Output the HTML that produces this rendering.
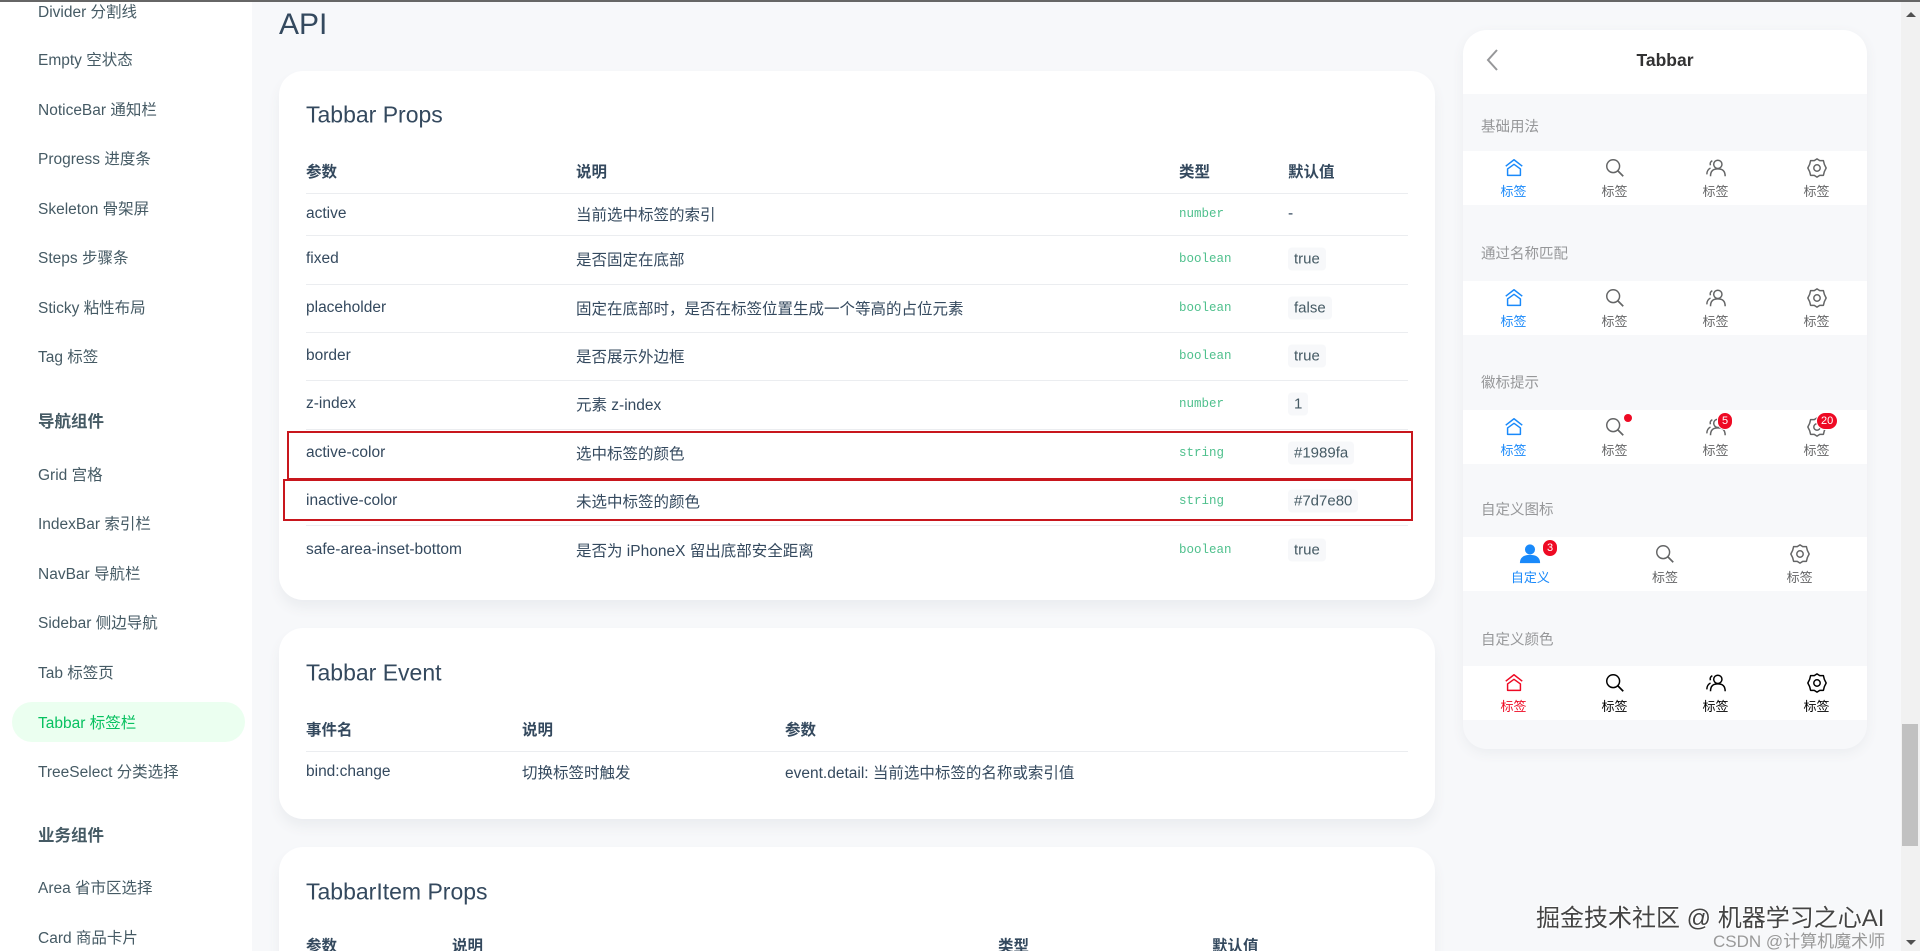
<!DOCTYPE html>
<html style="width:1920px;height:951px;overflow:hidden"><head><meta charset="utf-8"><style>
*{box-sizing:border-box;margin:0;padding:0}
body{width:1920px;height:951px;overflow:hidden;background:#f7f8fa;font-family:"Liberation Sans","Noto Sans CJK SC",sans-serif;color:#34495e}
#wrap{position:relative;width:1920px;height:951px;overflow:hidden;border-top:2px solid #666}
.abs{position:absolute}
.side{position:absolute;left:0;top:0;width:252px;height:951px;background:#fff}
.si{position:absolute;left:38px;font-size:15.5px;color:#455a64;transform:translateY(-50%);white-space:nowrap}
.sg{position:absolute;left:38px;font-size:16.5px;font-weight:bold;color:#455a64;transform:translateY(-50%)}
.act{position:absolute;left:12px;top:700px;width:233px;height:40px;border-radius:20px;background:#ebfff0}
.card{position:absolute;left:279px;width:1156px;background:#fff;border-radius:24px;box-shadow:0 8px 12px #ebedf0}
.ct{position:absolute;left:27px;font-size:23px;color:#34495e;transform:translateY(-50%)}
.th{position:absolute;font-size:15.5px;font-weight:bold;color:#34495e;transform:translateY(-50%)}
.td{position:absolute;font-size:15.5px;color:#34495e;transform:translateY(-50%);white-space:nowrap}
.ty{position:absolute;font-family:"Liberation Mono",monospace;font-size:12.5px;color:#4fc08d;transform:translateY(-50%)}
.code{position:absolute;font-size:15px;color:#455a64;background:#f7f8fa;padding:3px 6px;border-radius:4px;transform:translateY(-50%)}
.ln{position:absolute;left:27px;width:1102px;height:1px;background:#ebedf0}
.red{position:absolute;border:2px solid #c8161d}
.phone{position:absolute;left:1463px;top:28px;width:404px;height:719px;border-radius:24px;background:#f7f8fa;box-shadow:0 4px 12px #ebedf0;overflow:hidden}
.nav{position:absolute;left:0;top:0;width:404px;height:64px;background:#fff}
.lab{position:absolute;left:18px;font-size:14.5px;color:#969799;transform:translateY(-50%)}
.tb{position:absolute;left:0;width:404px;height:54px;background:#fff;display:flex}
.it{flex:1;display:flex;flex-direction:column;align-items:center;justify-content:center;font-size:13px;color:#646566;position:relative}
.it svg{width:22px;height:22px;margin-bottom:2px}
.on{color:#1989fa}
.badge{position:absolute;top:2px;background:#ee0a24;color:#fff;font-size:11px;border-radius:9px;padding:0 4px;line-height:16px;min-width:16px;text-align:center;border:1px solid #fff}
</style></head><body><div id="wrap">
<div class="side">
<div class="si" style="top:9px">Divider 分割线</div>
<div class="si" style="top:57px">Empty 空状态</div>
<div class="si" style="top:107px">NoticeBar 通知栏</div>
<div class="si" style="top:156px">Progress 进度条</div>
<div class="si" style="top:206px">Skeleton 骨架屏</div>
<div class="si" style="top:255px">Steps 步骤条</div>
<div class="si" style="top:305px">Sticky 粘性布局</div>
<div class="si" style="top:354px">Tag 标签</div>
<div class="sg" style="top:418px">导航组件</div>
<div class="si" style="top:472px">Grid 宫格</div>
<div class="si" style="top:521px">IndexBar 索引栏</div>
<div class="si" style="top:571px">NavBar 导航栏</div>
<div class="si" style="top:620px">Sidebar 侧边导航</div>
<div class="si" style="top:670px">Tab 标签页</div>
<div class="act"></div>
<div class="si" style="top:720px;color:#07c160">Tabbar 标签栏</div>
<div class="si" style="top:769px">TreeSelect 分类选择</div>
<div class="sg" style="top:832px">业务组件</div>
<div class="si" style="top:885px">Area 省市区选择</div>
<div class="si" style="top:935px">Card 商品卡片</div>
</div>

<div class="abs" style="left:279px;top:6px;font-size:30px;color:#34495e">API</div>

<div class="card" style="top:69px;height:529px">
<div class="ct" style="top:44px">Tabbar Props</div>
<div class="th" style="left:27px;top:100px">参数</div>
<div class="th" style="left:297px;top:100px">说明</div>
<div class="th" style="left:900px;top:100px">类型</div>
<div class="th" style="left:1009px;top:100px">默认值</div>
<div class="ln" style="top:122px"></div>
<div class="td" style="left:27px;top:143px">active</div><div class="td" style="left:297px;top:143px">当前选中标签的索引</div><div class="ty" style="left:900px;top:143px">number</div><div class="td" style="left:1009px;top:143px">-</div>
<div class="ln" style="top:164px"></div>
<div class="td" style="left:27px;top:188px">fixed</div><div class="td" style="left:297px;top:188px">是否固定在底部</div><div class="ty" style="left:900px;top:188px">boolean</div><div class="code" style="left:1009px;top:188px">true</div>
<div class="ln" style="top:213px"></div>
<div class="td" style="left:27px;top:237px">placeholder</div><div class="td" style="left:297px;top:237px">固定在底部时，是否在标签位置生成一个等高的占位元素</div><div class="ty" style="left:900px;top:237px">boolean</div><div class="code" style="left:1009px;top:237px">false</div>
<div class="ln" style="top:261px"></div>
<div class="td" style="left:27px;top:285px">border</div><div class="td" style="left:297px;top:285px">是否展示外边框</div><div class="ty" style="left:900px;top:285px">boolean</div><div class="code" style="left:1009px;top:285px">true</div>
<div class="ln" style="top:309px"></div>
<div class="td" style="left:27px;top:333px">z-index</div><div class="td" style="left:297px;top:333px">元素 z-index</div><div class="ty" style="left:900px;top:333px">number</div><div class="code" style="left:1009px;top:333px">1</div>
<div class="ln" style="top:358px"></div>
<div class="td" style="left:27px;top:382px">active-color</div><div class="td" style="left:297px;top:382px">选中标签的颜色</div><div class="ty" style="left:900px;top:382px">string</div><div class="code" style="left:1009px;top:382px">#1989fa</div>
<div class="ln" style="top:407px"></div>
<div class="td" style="left:27px;top:430px">inactive-color</div><div class="td" style="left:297px;top:430px">未选中标签的颜色</div><div class="ty" style="left:900px;top:430px">string</div><div class="code" style="left:1009px;top:430px">#7d7e80</div>
<div class="ln" style="top:454px"></div>
<div class="td" style="left:27px;top:479px">safe-area-inset-bottom</div><div class="td" style="left:297px;top:479px">是否为 iPhoneX 留出底部安全距离</div><div class="ty" style="left:900px;top:479px">boolean</div><div class="code" style="left:1009px;top:479px">true</div>
</div>
<div class="red" style="left:287px;top:429px;width:1126px;height:49px"></div>
<div class="red" style="left:283px;top:477px;width:1130px;height:42px"></div>

<div class="card" style="top:626px;height:191px">
<div class="ct" style="top:45px">Tabbar Event</div>
<div class="th" style="left:27px;top:101px">事件名</div>
<div class="th" style="left:243px;top:101px">说明</div>
<div class="th" style="left:506px;top:101px">参数</div>
<div class="ln" style="top:123px"></div>
<div class="td" style="left:27px;top:144px">bind:change</div><div class="td" style="left:243px;top:144px">切换标签时触发</div><div class="td" style="left:506px;top:144px">event.detail: 当前选中标签的名称或索引值</div>
</div>

<div class="card" style="top:845px;height:140px">
<div class="ct" style="top:45px">TabbarItem Props</div>
<div class="th" style="left:27px;top:98px">参数</div>
<div class="th" style="left:173px;top:98px">说明</div>
<div class="th" style="left:719px;top:98px">类型</div>
<div class="th" style="left:933px;top:98px">默认值</div>
</div>

<svg width="0" height="0" style="position:absolute"><defs>
<symbol id="home" viewBox="0 0 24 24"><path d="M3 10 L12 3 L21 10 M5 13 L12 8 L19 13 V20 H5 Z" fill="none" stroke="currentColor" stroke-width="1.6" stroke-linejoin="round"/></symbol>
<symbol id="search" viewBox="0 0 24 24"><circle cx="10" cy="10" r="7" fill="none" stroke="currentColor" stroke-width="1.6"/><path d="M15 15 L21 21" stroke="currentColor" stroke-width="1.8"/></symbol>
<symbol id="friends" viewBox="0 0 24 24"><circle cx="14" cy="8" r="4.5" fill="none" stroke="currentColor" stroke-width="1.6"/><path d="M6 21 C6 15 9 13 14 13 C19 13 22 15 22 21 M8 4 C6 5 5 7 6 9 M2 19 C2 15 4 13 6 12" fill="none" stroke="currentColor" stroke-width="1.6"/></symbol>
<symbol id="setting" viewBox="0 0 24 24"><path d="M12 2 L15 4 L19 4 L20 8 L22 12 L20 16 L19 20 L15 20 L12 22 L9 20 L5 20 L4 16 L2 12 L4 8 L5 4 L9 4 Z" fill="none" stroke="currentColor" stroke-width="1.6" stroke-linejoin="round"/><circle cx="12" cy="12" r="3.5" fill="none" stroke="currentColor" stroke-width="1.6"/></symbol>
</defs></svg>

<div class="phone">
<div class="nav">
<svg class="abs" style="left:22px;top:18px" width="14" height="24" viewBox="0 0 14 24"><path d="M12 2 L3 12 L12 22" fill="none" stroke="#969799" stroke-width="2"/></svg>
<div class="abs" style="left:0;width:404px;top:20px;text-align:center;font-size:17.5px;font-weight:bold;color:#323233">Tabbar</div>
</div>
<div class="lab" style="top:96px">基础用法</div>
<div class="tb" style="top:121px">
<div class="it on"><svg><use href="#home"/></svg>标签</div><div class="it"><svg><use href="#search"/></svg>标签</div><div class="it"><svg><use href="#friends"/></svg>标签</div><div class="it"><svg><use href="#setting"/></svg>标签</div></div>
<div class="lab" style="top:223px">通过名称匹配</div>
<div class="tb" style="top:251px">
<div class="it on"><svg><use href="#home"/></svg>标签</div><div class="it"><svg><use href="#search"/></svg>标签</div><div class="it"><svg><use href="#friends"/></svg>标签</div><div class="it"><svg><use href="#setting"/></svg>标签</div></div>
<div class="lab" style="top:352px">徽标提示</div>
<div class="tb" style="top:380px">
<div class="it on"><svg><use href="#home"/></svg>标签</div>
<div class="it"><svg><use href="#search"/></svg>标签<span style="position:absolute;top:4px;left:60px;width:8px;height:8px;border-radius:4px;background:#ee0a24"></span></div>
<div class="it"><svg><use href="#friends"/></svg>标签<span class="badge" style="left:52px">5</span></div>
<div class="it"><svg><use href="#setting"/></svg>标签<span class="badge" style="left:50px">20</span></div></div>
<div class="lab" style="top:479px">自定义图标</div>
<div class="tb" style="top:507px">
<div class="it on"><svg viewBox="0 0 24 24"><circle cx="12" cy="7" r="5.5" fill="#1989fa"/><path d="M1 22 C1 15 6 13 12 13 C18 13 23 15 23 22 Z" fill="#1989fa"/></svg>自定义<span class="badge" style="left:79px">3</span></div>
<div class="it"><svg><use href="#search"/></svg>标签</div><div class="it"><svg><use href="#setting"/></svg>标签</div></div>
<div class="lab" style="top:609px">自定义颜色</div>
<div class="tb" style="top:636px">
<div class="it" style="color:#ee0a24"><svg><use href="#home"/></svg>标签</div><div class="it" style="color:#000"><svg><use href="#search"/></svg>标签</div><div class="it" style="color:#000"><svg><use href="#friends"/></svg>标签</div><div class="it" style="color:#000"><svg><use href="#setting"/></svg>标签</div></div>
</div>

<div class="abs" style="left:1901px;top:0;width:19px;height:951px;background:#f1f1f1"></div>
<div class="abs" style="left:1902px;top:722px;width:16px;height:122px;background:#c1c1c1"></div>
<div class="abs" style="left:1906px;top:10px;width:0;height:0;border-left:5px solid transparent;border-right:5px solid transparent;border-bottom:5px solid #505050"></div>
<div class="abs" style="left:1906px;top:938px;width:0;height:0;border-left:5px solid transparent;border-right:5px solid transparent;border-top:5px solid #505050"></div>
<div class="abs" style="left:1536px;top:896px;font-size:24px;color:#444;text-shadow:1px 1px 0 #fff,-1px -1px 0 #fff;white-space:nowrap">掘金技术社区 @ 机器学习之心AI</div>
<div class="abs" style="left:1713px;top:925px;font-size:17px;color:#999;white-space:nowrap">CSDN @计算机魔术师</div>
</div></body></html>
